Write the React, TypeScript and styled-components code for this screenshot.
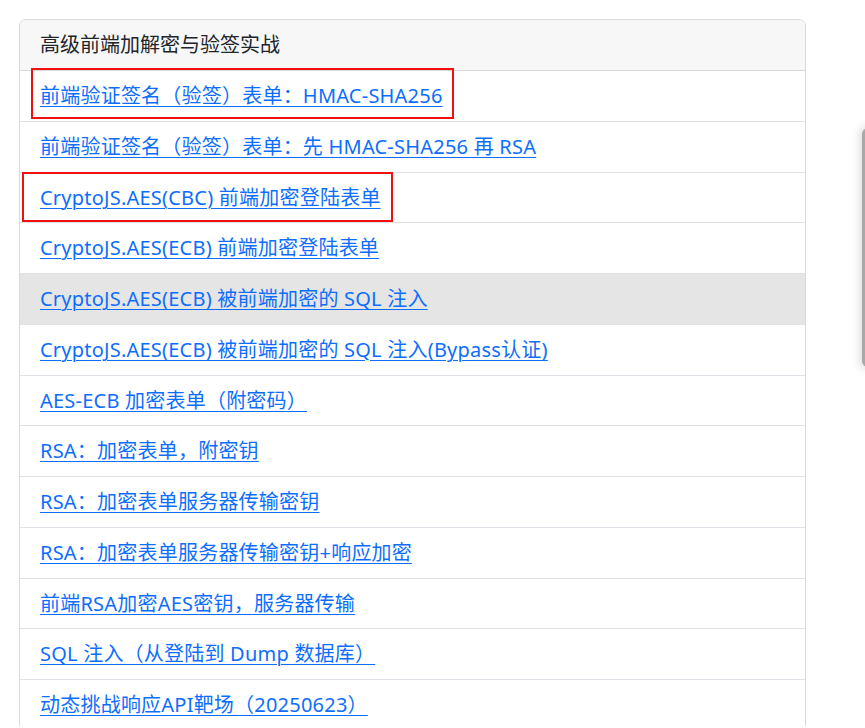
import React from "react";
import styled, { createGlobalStyle } from "styled-components";

const GlobalStyle = createGlobalStyle`
  html, body {
    margin: 0;
    padding: 0;
    background: #ffffff;
    font-family: "Noto Sans", "Noto Sans CJK SC", sans-serif;
    overflow: hidden;
  }
`;

const Page = styled.div`
  padding: 19px 0 0 19px;
`;

const Card = styled.div`
  width: 787px;
  box-sizing: border-box;
  border: 1px solid #d9d9d9;
  border-radius: 7px;
  background: #fff;
  display: flex;
  flex-direction: column;
`;

const CardHeader = styled.div`
  padding: 10px 20px;
  line-height: 30px;
  font-size: 20px;
  color: #212529;
  background: #f7f7f7;
  border-bottom: 1px solid #d9d9d9;
  border-radius: 6px 6px 0 0;
`;

const List = styled.div`
  display: flex;
  flex-direction: column;
`;

const Row = styled.div<{ $active?: boolean; $last?: boolean }>`
  position: relative;
  padding: 10px 20px;
  line-height: 29.75px;
  font-size: 20px;
  background: ${(p) => (p.$active ? "#e5e5e5" : "#fff")};
  border-bottom: ${(p) => (p.$last ? "none" : "1px solid #dee2e6")};
`;

const Link = styled.a`
  color: #0d6efd;
  text-decoration: underline;
  text-underline-offset: 3px;
  text-decoration-thickness: 1px;
  letter-spacing: 0.22px;
  white-space: nowrap;
`;

const Annotation = styled.div<{ $left: number; $top: number; $w: number; $h: number }>`
  position: absolute;
  left: ${(p) => p.$left}px;
  top: ${(p) => p.$top}px;
  width: ${(p) => p.$w}px;
  height: ${(p) => p.$h}px;
  box-sizing: border-box;
  border: 2px solid #f01010;
  pointer-events: none;
`;

const SidePanel = styled.div`
  position: fixed;
  left: 862px;
  top: 128px;
  width: 24px;
  height: 239px;
  background: #a9a9a9;
  border-radius: 6px;
  box-shadow: 0 0 8px 3px rgba(0, 0, 0, 0.12);
`;

type Item = {
  text: string;
  active?: boolean;
  box?: { left: number; top: number; w: number; h: number };
};

const items: Item[] = [
  {
    text: "前端验证签名（验签）表单：HMAC-SHA256",
    box: { left: 11, top: -3, w: 423, h: 51 },
  },
  { text: "前端验证签名（验签）表单：先 HMAC-SHA256 再 RSA" },
  {
    text: "CryptoJS.AES(CBC) 前端加密登陆表单",
    box: { left: 2, top: -1, w: 371, h: 50 },
  },
  { text: "CryptoJS.AES(ECB) 前端加密登陆表单" },
  { text: "CryptoJS.AES(ECB) 被前端加密的 SQL 注入", active: true },
  { text: "CryptoJS.AES(ECB) 被前端加密的 SQL 注入(Bypass认证)" },
  { text: "AES-ECB 加密表单（附密码）" },
  { text: "RSA：加密表单，附密钥" },
  { text: "RSA：加密表单服务器传输密钥" },
  { text: "RSA：加密表单服务器传输密钥+响应加密" },
  { text: "前端RSA加密AES密钥，服务器传输" },
  { text: "SQL 注入（从登陆到 Dump 数据库）" },
  { text: "动态挑战响应API靶场（20250623）" },
];

export default function App() {
  return (
    <>
      <GlobalStyle />
      <Page>
        <Card>
          <CardHeader>高级前端加解密与验签实战</CardHeader>
          <List>
            {items.map((it, i) => (
              <Row key={i} $active={it.active} $last={i === items.length - 1}>
                <Link href="#">{it.text}</Link>
                {it.box && (
                  <Annotation
                    $left={it.box.left}
                    $top={it.box.top}
                    $w={it.box.w}
                    $h={it.box.h}
                  />
                )}
              </Row>
            ))}
          </List>
        </Card>
      </Page>
      <SidePanel />
    </>
  );
}
